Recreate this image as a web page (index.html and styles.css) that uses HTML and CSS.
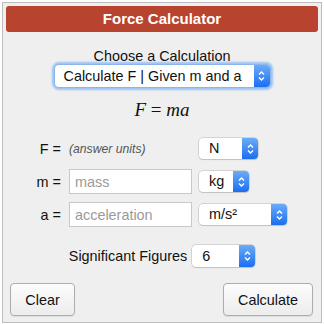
FILE: index.html
```html
<!DOCTYPE html>
<html>
<head>
<meta charset="utf-8">
<link rel="stylesheet" href="styles.css">
</head>
<body>
<div class="calc">
  <div class="header">Force Calculator</div>
  <div class="choose">Choose a Calculation</div>
  <div class="center">
    <div class="sel sel-main focus"><span class="sel-text">Calculate F | Given m and a</span><span class="arrow"><svg width="9" height="12" viewBox="0 0 9 12"><path d="M2 4.5 L4.5 2 L7 4.5 M2 7.5 L4.5 10 L7 7.5" fill="none" stroke="#fff" stroke-width="1.4"/></svg></span></div>
  </div>
  <div class="formula"><i>F</i> = <i>ma</i></div>
  <div class="grid">
    <div class="lbl">F =</div>
    <div class="units">(answer units)</div>
    <div class="sel sel-n"><span class="sel-text">N</span><span class="arrow"><svg width="9" height="12" viewBox="0 0 9 12"><path d="M2 4.5 L4.5 2 L7 4.5 M2 7.5 L4.5 10 L7 7.5" fill="none" stroke="#fff" stroke-width="1.4"/></svg></span></div>

    <div class="lbl">m =</div>
    <input class="inp" type="text" placeholder="mass">
    <div class="sel sel-kg"><span class="sel-text">kg</span><span class="arrow"><svg width="9" height="12" viewBox="0 0 9 12"><path d="M2 4.5 L4.5 2 L7 4.5 M2 7.5 L4.5 10 L7 7.5" fill="none" stroke="#fff" stroke-width="1.4"/></svg></span></div>

    <div class="lbl">a =</div>
    <input class="inp" type="text" placeholder="acceleration">
    <div class="sel sel-ms"><span class="sel-text">m/s²</span><span class="arrow"><svg width="9" height="12" viewBox="0 0 9 12"><path d="M2 4.5 L4.5 2 L7 4.5 M2 7.5 L4.5 10 L7 7.5" fill="none" stroke="#fff" stroke-width="1.4"/></svg></span></div>
  </div>
  <div class="sig">
    <span>Significant Figures</span>
    <div class="sel sel-sig"><span class="sel-text">6</span><span class="arrow"><svg width="9" height="12" viewBox="0 0 9 12"><path d="M2 4.5 L4.5 2 L7 4.5 M2 7.5 L4.5 10 L7 7.5" fill="none" stroke="#fff" stroke-width="1.4"/></svg></span></div>
  </div>
  <div class="buttons">
    <button class="btn btn-clear">Clear</button>
    <button class="btn btn-calc">Calculate</button>
  </div>
</div>
</body>
</html>
```

FILE: styles.css
```css
html, body {
  margin: 0;
  padding: 0;
  background: #fff;
}
body {
  padding: 2px;
  font-family: "Liberation Sans", Arial, sans-serif;
  color: #111;
}
.calc {
  border: 1px solid #bdbdbd;
  background: #efefef;
  padding: 3px 3px 0 3px;
  box-sizing: content-box;
  width: 312px;
  height: 316px;
}
.header {
  height: 26px;
  line-height: 26px;
  background: #b8432f;
  border-radius: 3px;
  color: #fff;
  font-weight: bold;
  font-size: 15px;
  text-align: center;
}
.choose {
  margin-top: 15px;
  height: 18px;
  line-height: 18px;
  font-size: 14.4px;
  text-align: center;
}
.center {
  display: flex;
  justify-content: center;
}
.sel {
  display: flex;
  align-items: stretch;
  height: 21px;
  background: #fff;
  border-radius: 4px;
  box-shadow: 0 0 0 0.5px #b7b7b7, 0 1px 1px rgba(0,0,0,0.15);
  font-size: 14.4px;
  box-sizing: border-box;
}
.sel-text {
  flex: 1;
  padding-left: 10px;
  line-height: 21px;
  white-space: nowrap;
}
.arrow {
  width: 16px;
  border-radius: 0 4px 4px 0;
  background: linear-gradient(#6aacf8, #1b6ef0);
  display: flex;
  align-items: center;
  justify-content: center;
}
.sel-main {
  width: 215px;
  height: 22px;
}
.sel-main .sel-text {
  padding-left: 9px;
  line-height: 22px;
}
.focus {
  box-shadow: 0 0 0 1px #8ab6ee, 0 0 2px 3px #9cc3f3;
}
.formula {
  margin-top: 14px;
  height: 18px;
  line-height: 18px;
  font-family: "Liberation Serif", "Times New Roman", serif;
  font-size: 19px;
  text-align: center;
}
.grid {
  margin-top: 17px;
  display: grid;
  grid-template-columns: 55px 123px auto;
  grid-auto-rows: 25px;
  column-gap: 8px;
  row-gap: 8px;
  align-items: center;
}
.lbl {
  text-align: right;
  font-size: 14.4px;
}
.units {
  font-style: italic;
  font-size: 12.2px;
  color: #555;
}
.inp {
  width: 123px;
  height: 25px;
  box-sizing: border-box;
  border: 1px solid #c8c8c8;
  background: #fff;
  font-family: "Liberation Sans", Arial, sans-serif;
  font-size: 14.4px;
  padding: 0 0 0 5px;
  margin: 0;
  outline: none;
}
.inp::placeholder {
  color: #9a9a9a;
}
.grid .sel {
  margin-left: -1px;
  justify-self: start;
}
.sel-n { width: 59px; }
.sel-kg { width: 50px; }
.sel-ms { width: 88px; }
.sig {
  margin-top: 18px;
  display: flex;
  justify-content: center;
  align-items: center;
  gap: 5px;
  font-size: 14.4px;
  height: 22px;
}
.sel-sig {
  width: 63px;
  height: 22px;
}
.sel-sig .sel-text {
  line-height: 22px;
}
.buttons {
  margin-top: 16px;
  display: flex;
  justify-content: space-between;
  padding: 0 5px 0 4px;
}
.btn {
  height: 33px;
  border: 1px solid #adadad;
  border-radius: 4px;
  background: linear-gradient(#fcfcfc, #ececec);
  font-family: "Liberation Sans", Arial, sans-serif;
  font-size: 14.4px;
  color: #111;
  padding: 0;
  box-shadow: 0 1px 1px rgba(0,0,0,0.08);
}
.btn-clear { width: 65px; }
.btn-calc { width: 90px; }
```
